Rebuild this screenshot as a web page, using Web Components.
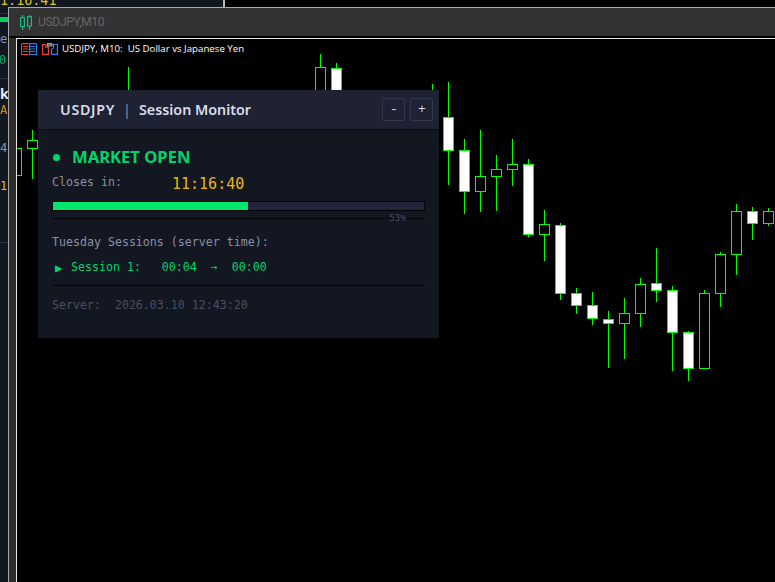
<!DOCTYPE html>
<html>
<head>
<meta charset="utf-8">
<title>USDJPY Session Monitor</title>
<style>
  html, body { margin: 0; padding: 0; background: #000; }
  body { width: 775px; height: 582px; overflow: hidden; position: relative; font-family: "Noto Sans", sans-serif; }
</style>
</head>
<body>
<back-window></back-window>
<chart-window title-text="USDJPY,M10">
  <candle-chart></candle-chart>
  <chart-label>USDJPY, M10:&nbsp; US Dollar vs Japanese Yen</chart-label>
  <session-panel symbol="USDJPY" name="Session Monitor">
    <panel-button slot="buttons">-</panel-button>
    <panel-button slot="buttons">+</panel-button>
  </session-panel>
</chart-window>

<script>
class BackWindow extends HTMLElement {
  constructor() {
    super();
    this.attachShadow({ mode: 'open' });
    this.shadowRoot.innerHTML = `
      <style>
        :host { display: block; position: absolute; left: 0; top: 0; width: 775px; height: 582px; background: #000; overflow: hidden; }
        .side { position: absolute; left: 0; top: 0; width: 8px; height: 582px; background: #131722; overflow: hidden; }
        .left { position: absolute; left: 0; top: 0; width: 223px; height: 8px; background: #131722; border-right: 2px solid #b9b9b9; overflow: hidden; }
        span, i { position: absolute; font-style: normal; white-space: pre; }
        .clock { left: -8px; top: -8px; font: 13.4px/18px "DejaVu Sans Mono", monospace; color: #d8c61e; }
        .bar { left: 0; top: 17px; width: 8px; height: 5px; background: #00d26a; }
        .rule { left: 0; width: 8px; height: 1px; background: #2a2e3d; }
        .ch { left: 0; font: 12px/14px "DejaVu Sans Mono", monospace; }
      </style>
      <div class="side">
        <i class="rule" style="top:13px"></i>
        <i class="bar"></i>
        <span class="ch" style="top:32px;color:#8b90a0">e</span>
        <span class="ch" style="top:53px;left:-1px;color:#00b060">0</span>
        <i class="rule" style="top:78px"></i>
        <span class="ch" style="top:87px;left:0;color:#e8eaf0;font:bold 14px/14px 'Noto Sans',sans-serif">k</span>
        <span class="ch" style="top:103px;color:#d08a10">A</span>
        <span class="ch" style="top:141px;color:#8b90a0">4</span>
        <span class="ch" style="top:179px;color:#d8c61e">1</span>
        <i class="rule" style="top:242px"></i>
      </div>
      <div class="left"><span class="clock">11:16:41</span></div>
    `;
  }
}

class ChartWindow extends HTMLElement {
  constructor() {
    super();
    this.attachShadow({ mode: 'open' });
  }

  connectedCallback() {
    this.shadowRoot.innerHTML = `
      <style>
        :host { display: flex; flex-direction: column; position: absolute; left: 8px; top: 7px; width: 767px; height: 575px; background: #333; border-top: 1px solid #a8a8a8; border-left: 1px solid #a8a8a8; box-sizing: border-box; }
        .title { display: flex; align-items: center; gap: 6px; height: 28px; padding-left: 11px; flex: none; box-sizing: border-box; color: #666; font: 12px Roboto, sans-serif; letter-spacing: -.3px; }
        svg { display: block; }
        .frame { flex: 1; display: flex; background: #2c2c2c; padding-left: 7px; min-height: 0; }
        .chart { flex: 1; position: relative; background: #000; border-left: 1px solid #e8e8e8; box-sizing: border-box; }
        .chart::before { content: ""; display: block; height: 1px; background: #e8e8e8; }
        .topgap { height: 2px; background: #000; flex: none; }
      </style>
      <div class="title">
        <svg width="12" height="15" viewBox="0 0 12 15" fill="none" stroke="#16b87c" stroke-width="1.2">
          <path d="M2.5 0v2M2.5 12v3M9.5 0v1M9.5 11v4"/>
          <rect x=".6" y="2.6" width="3.8" height="9"/>
          <rect x="7.6" y="1.6" width="3.8" height="9.4"/>
        </svg>
        <span>${this.getAttribute('title-text')}</span>
      </div>
      <div class="topgap"></div>
      <div class="frame"><div class="chart"><slot></slot></div></div>
    `;
  }
}

// x, wick top, body top, body bottom, wick bottom, filled
const CANDLES = [
  [16, 148, 148, 176, 176, 0],
  [32, 130, 140, 149, 179, 0],
  [128, 67, 90, 90, 90, 2],
  [320, 54, 67, 120, 120, 0],
  [336, 63, 68, 120, 120, 1],
  [432, 84, 90, 90, 90, 2],
  [448, 82, 117, 151, 185, 1],
  [464, 139, 150, 192, 214, 1],
  [480, 130, 176, 192, 212, 0],
  [496, 155, 169, 177, 211, 0],
  [512, 139, 164, 170, 186, 0],
  [528, 159, 164, 235, 237, 1],
  [544, 210, 224, 235, 261, 0],
  [560, 223, 225, 294, 300, 1],
  [576, 288, 293, 306, 314, 1],
  [592, 292, 305, 319, 325, 1],
  [608, 311, 319, 324, 368, 1],
  [624, 298, 313, 324, 359, 0],
  [640, 278, 284, 314, 327, 0],
  [656, 248, 283, 291, 302, 1],
  [672, 286, 290, 333, 371, 1],
  [688, 331, 332, 369, 381, 1],
  [704, 290, 293, 369, 369, 0],
  [720, 252, 254, 294, 307, 0],
  [736, 204, 211, 255, 275, 0],
  [752, 207, 211, 224, 240, 1],
  [768, 208, 211, 224, 226, 0]
];

class CandleChart extends HTMLElement {
  constructor() {
    super();
    this.attachShadow({ mode: 'open' });
  }

  connectedCallback() {
    const parts = CANDLES.map(([x, top, bodyTop, bodyBottom, bottom, kind]) => {
      const wick = `<rect x="${x}" y="${top}" width="1" height="${bottom - top}" fill="#00ff00"/>`;
      if (kind === 2) return wick;
      const fill = kind === 1 ? '#fff' : '#000';
      const h = bodyBottom - bodyTop;
      return wick
        + `<rect x="${x - 5}" y="${bodyTop}" width="11" height="${h}" fill="#00ff00"/>`
        + `<rect x="${x - 4}" y="${bodyTop + 1}" width="9" height="${h - 2}" fill="${fill}"/>`;
    });
    this.shadowRoot.innerHTML = `
      <style>
        :host { display: block; position: absolute; left: 0; top: 1px; width: 758px; height: 543px; }
        svg { display: block; }
      </style>
      <svg width="758" height="543" viewBox="17 39 758 543">${parts.join('')}</svg>
    `;
  }
}

class ChartLabel extends HTMLElement {
  constructor() {
    super();
    this.attachShadow({ mode: 'open' });
    this.shadowRoot.innerHTML = `
      <style>
        :host { display: flex; align-items: center; position: absolute; left: 4px; top: 5px; height: 12px; color: #fff; font: 9.7px/12px "Open Sans", sans-serif; white-space: nowrap; }
        svg { display: block; flex: none; }
        .a { margin-right: 5px; }
        .b { margin-right: 4px; }
      </style>
      <svg class="a" width="16" height="12" viewBox="0 0 16 12" fill="none" stroke-width="1.2">
        <path d="M7.5 .6H1.5a1 1 0 0 0-1 1v9a1 1 0 0 0 1 1h6" stroke="#ee3f3a"/>
        <path d="M2 3.5h5M2 6h5M2 8.5h5" stroke="#ee3f3a"/>
        <path d="M8.5 .6h6a1 1 0 0 1 1 1v9a1 1 0 0 1-1 1h-6z" stroke="#2f7fe8"/>
        <path d="M9 3.5h5M9 6h5M9 8.5h5" stroke="#2f7fe8"/>
      </svg>
      <svg class="b" width="16" height="12" viewBox="0 0 16 12" fill="none" stroke-width="1.2">
        <path d="M.6 1.5h3.2v2.6h2.6v7.3H.6z" stroke="#ee3f3a"/>
        <path d="M5.5 .6h4.5v2.4H5.5z" stroke="#a0a0a0" fill="#555"/>
        <path d="M9.6 6l2-1V1.5h3.8v9.9H9.6z" stroke="#2f7fe8"/>
      </svg>
      <slot></slot>
    `;
  }
}

class PanelButton extends HTMLElement {
  constructor() {
    super();
    this.attachShadow({ mode: 'open' });
    this.shadowRoot.innerHTML = `
      <style>
        :host { display: flex; align-items: center; justify-content: center; width: 23px; height: 23px; padding-left: 1px; box-sizing: border-box; border: 1px solid #33374a; border-radius: 1px; background: #1e2233; color: #d8dce8; font: 13px/1 "Liberation Mono", monospace; }
      </style>
      <slot></slot>
    `;
  }
}

class SessionPanel extends HTMLElement {
  constructor() {
    super();
    this.attachShadow({ mode: 'open' });
  }

  connectedCallback() {
    const symbol = this.getAttribute('symbol');
    const name = this.getAttribute('name');
    this.shadowRoot.innerHTML = `
      <style>
        :host { display: block; position: absolute; left: 21px; top: 52px; width: 401px; height: 248px; background: #131722; overflow: hidden; }
        header { display: flex; align-items: center; justify-content: space-between; height: 40px; box-sizing: border-box; padding: 0 6px 0 22px; background: #1e2233; border-bottom: 1px solid #0b0d14; }
        h1 { display: flex; gap: 8px; margin: 0; font: 600 14.3px/20px "Noto Sans", sans-serif; color: #d8dce8; }
        h1 .sym { letter-spacing: .7px; }
        h1 b { font-weight: 400; color: #8a90a6; }
        .buttons { display: flex; gap: 5px; }
        main { padding: 17px 14px 0; font: 11.62px/14px "DejaVu Sans Mono", monospace; color: #8a90a6; }
        .pre { white-space: pre; }
        .status { display: flex; align-items: center; gap: 12px; font: 700 16.6px/20px "Noto Sans", sans-serif; color: #00d46c; }
        .dot { width: 7px; height: 7px; margin-left: 1px; border-radius: 50%; background: #00d46c; }
        .closes { display: flex; height: 20px; margin-top: 7px; align-items: flex-start; }
        .closes span { display: block; width: 120px; padding-top: 1px; }
        .closes strong { font: 400 15px/20px "DejaVu Sans Mono", monospace; color: #e8b70e; }
        .track { height: 10px; margin-top: 7px; background: #23263a; border: 1px solid #05060a; box-sizing: border-box; }
        .fill { width: 195px; height: 100%; background: #00e66e; }
        .under { position: relative; height: 1px; margin-top: 7px; background: #05060a; }
        .pct { position: absolute; right: 19px; top: -6px; font: 9px/12px "DejaVu Sans Mono", monospace; color: #4c5163; letter-spacing: .2px; }
        .sessions { margin-top: 16px; }
        .row { display: flex; margin-top: 11px; color: #00d46c; }
        .mark { width: 19px; font-size: 12px; padding-left: 3px; box-sizing: border-box; line-height: 16px; }
        hr { height: 1px; margin: 9px 0 0; border: 0; background: #05060a; }
        .server { margin-top: 12px; color: #4a4f5e; }
      </style>
      <header>
        <h1><span class="sym">${symbol}</span><b>|</b><span>${name}</span></h1>
        <div class="buttons"><slot name="buttons"></slot></div>
      </header>
      <main>
        <div class="status"><span class="dot"></span>MARKET OPEN</div>
        <div class="closes"><span>Closes in:</span><strong>11:16:40</strong></div>
        <div class="track"><div class="fill"></div></div>
        <div class="under"><span class="pct">53%</span></div>
        <div class="sessions">Tuesday Sessions (server time):</div>
        <div class="row pre"><span class="mark">▶</span>Session 1:   00:04  →  00:00</div>
        <hr>
        <div class="server pre">Server:  2026.03.10 12:43:20</div>
      </main>
    `;
  }
}

customElements.define('back-window', BackWindow);
customElements.define('chart-window', ChartWindow);
customElements.define('candle-chart', CandleChart);
customElements.define('chart-label', ChartLabel);
customElements.define('panel-button', PanelButton);
customElements.define('session-panel', SessionPanel);
</script>
</body>
</html>
